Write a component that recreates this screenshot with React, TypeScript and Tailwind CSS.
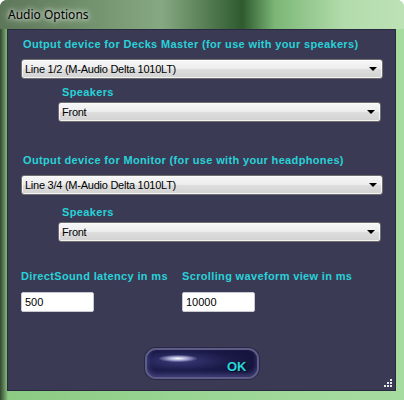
export default function App() {
  // Windows 7 style combo box
  const Combo = ({ text, className }: { text: string; className: string }) => (
    <div
      className={`relative h-[20px] rounded-[3px] border border-[#707070] bg-[linear-gradient(#f7f7f7_0%,#ececec_50%,#dedede_51%,#d2d2d2_100%)] shadow-[inset_0_0_0_1px_rgba(255,255,255,0.7)] ${className}`}
    >
      <span className="absolute left-[3px] top-[2px] text-[11px] leading-[14px] tracking-[-0.25px] text-black">{text}</span>
      <span className="absolute right-[5px] top-[7px] h-0 w-0 border-x-[4px] border-t-[4px] border-x-transparent border-t-black" />
    </div>
  );

  const label = 'text-[11px] font-bold leading-[13px] tracking-[0.35px] text-[#28d2d8]';
  const field =
    'mt-[9px] h-[20px] w-[73px] rounded-[2px] border border-[#c9c9d4] bg-white pl-[3px] text-[11px] leading-[18px] text-black';

  return (
    <div className="relative flex h-[400px] w-[404px] flex-col overflow-hidden rounded-t-[7px] bg-[linear-gradient(90deg,#33452f_0%,#8bcb83_2%,#9ad594_50%,#a7dca1_100%)] font-['Liberation_Sans',Arial,sans-serif]">
      {/* title bar */}
      <div className="flex h-[29px] items-center bg-[linear-gradient(90deg,#5d7659_0%,#6a8865_15%,#86a982_40%,#2f5a2e_60%,#7bb676_68%,#b2dcab_85%,#bde2b5_100%)] pl-[8px]">
        <span className="font-['Noto_Sans',sans-serif] text-[12px] text-black [text-shadow:0_0_8px_rgba(255,255,255,0.9),0_0_4px_rgba(255,255,255,0.9)]">
          Audio Options
        </span>
      </div>

      {/* content */}
      <div className="relative mb-[9px] ml-[7px] mr-[8px] flex-1 border border-[#2a2940] bg-[#3b3a55] pl-[13px] pt-[8px]">
        <div className={`${label} pl-[2px]`}>Output device for Decks Master (for use with your speakers)</div>
        <Combo text="Line 1/2 (M-Audio Delta 1010LT)" className="mt-[8px] w-[362px]" />
        <div className={`${label} ml-[41px] mt-[7px]`}>Speakers</div>
        <Combo text="Front" className="ml-[37px] mt-[3px] w-[323px]" />

        <div className={`${label} mt-[32px] pl-[2px]`}>Output device for Monitor (for use with your headphones)</div>
        <Combo text="Line 3/4 (M-Audio Delta 1010LT)" className="mt-[8px] w-[362px]" />
        <div className={`${label} ml-[41px] mt-[11px]`}>Speakers</div>
        <Combo text="Front" className="ml-[37px] mt-[3px] w-[323px]" />

        <div className="mt-[28px] flex">
          <div className="w-[161px]">
            <div className={`${label} tracking-[0.2px]`}>DirectSound latency in ms</div>
            <div className={field}>500</div>
          </div>
          <div>
            <div className={`${label} tracking-[0.3px]`}>Scrolling waveform view in ms</div>
            <div className={field}>10000</div>
          </div>
        </div>

        {/* OK button */}
        <div className="relative ml-[124px] mt-[36px] h-[31px] w-[114px] rounded-[11px] border-2 border-[#5d5c86] bg-[radial-gradient(ellipse_at_30%_40%,#3a3a7a_0%,#1b1a48_45%,#0f0e30_100%)] shadow-[0_0_0_1px_#2a2945,inset_0_-3px_5px_rgba(120,120,200,0.45)]">
          <div className="absolute left-[12px] top-[5px] h-[7px] w-[38px] rounded-full bg-[radial-gradient(ellipse,#ffffff_0%,rgba(220,220,255,0.7)_35%,rgba(120,120,200,0)_75%)]" />
          <span className="absolute left-[80px] top-[10px] text-[13px] font-bold leading-[14px] text-[#27d6dc] [text-shadow:1px_1px_1px_#0a0a20]">
            OK
          </span>
        </div>

        {/* resize grip */}
        <svg className="absolute bottom-[2px] right-[2px]" width="9" height="9" viewBox="0 0 9 9">
          <g fill="#e8e8f0">
            <rect x="6" y="0" width="2" height="2" />
            <rect x="3" y="3" width="2" height="2" />
            <rect x="6" y="3" width="2" height="2" />
            <rect x="0" y="6" width="2" height="2" />
            <rect x="3" y="6" width="2" height="2" />
            <rect x="6" y="6" width="2" height="2" />
          </g>
        </svg>
      </div>
    </div>
  );
}
